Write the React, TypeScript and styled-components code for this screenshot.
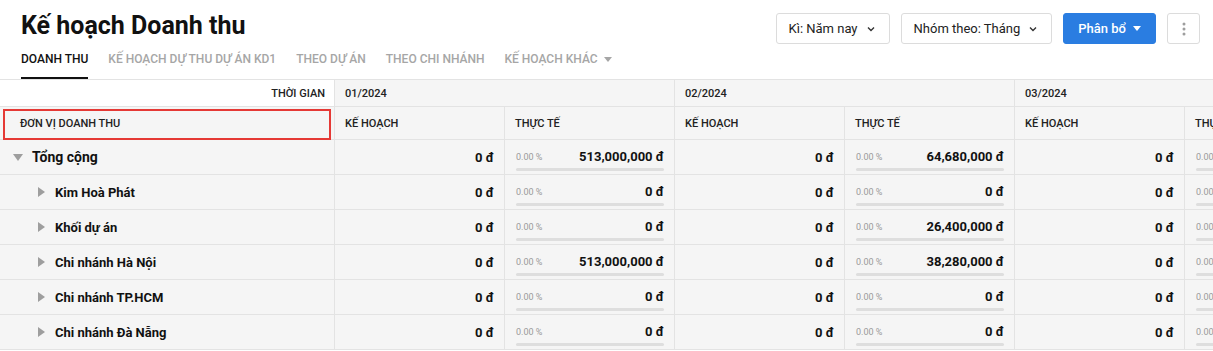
import React from 'react';
import styled, { createGlobalStyle } from 'styled-components';

const GlobalStyle = createGlobalStyle`
    body {
        margin: 0;
        background: #ffffff;
        font-family: Roboto, "Noto Sans", Arial, sans-serif;
        color: #111;
    }
    * { box-sizing: border-box; }
`;

const Page = styled.div`
    width: 1213px;
    height: 351px;
    overflow: hidden;
    background: #fff;
`;

const Header = styled.header`
    display: flex;
    justify-content: space-between;
    align-items: flex-start;
    padding: 0 13px 0 21px;
    border-bottom: 1px solid #e3e3e3;
    height: 80px;
`;

const TitleBlock = styled.div`
    display: flex;
    flex-direction: column;
`;

const Title = styled.h1`
    margin: 10px 0 0;
    font-size: 25px;
    font-weight: 700;
    line-height: 32px;
    color: #111;
`;

const Tabs = styled.nav`
    display: flex;
    gap: 20px;
    margin-top: 6px;
`;

const Tab = styled.div<{ $active?: boolean }>`
    display: flex;
    align-items: center;
    gap: 6px;
    height: 31px;
    font-size: 12px;
    font-weight: 500;
    color: ${(p) => (p.$active ? '#111' : '#a6a6a6')};
    border-bottom: 2px solid ${(p) => (p.$active ? '#111' : 'transparent')};
    padding-bottom: 7px;
`;

const Caret = styled.span<{ $color?: string }>`
    width: 0;
    height: 0;
    border-left: 4px solid transparent;
    border-right: 4px solid transparent;
    border-top: 5px solid ${(p) => p.$color || '#a6a6a6'};
`;

const Toolbar = styled.div`
    display: flex;
    align-items: center;
    gap: 11px;
    margin-top: 13px;
`;

const SelectButton = styled.button<{ $primary?: boolean }>`
    display: flex;
    align-items: center;
    gap: ${(p) => (p.$primary ? 7 : 8)}px;
    height: 31px;
    padding: ${(p) => (p.$primary ? '0 14px 0 14px' : '0 13px 0 12px')};
    border: 1px solid ${(p) => (p.$primary ? '#2a7de1' : '#dcdcdc')};
    border-radius: 3px;
    background: ${(p) => (p.$primary ? '#2a7de1' : '#fff')};
    color: ${(p) => (p.$primary ? '#fff' : '#222')};
    font-family: Roboto, sans-serif;
    font-size: 13px;
    font-weight: ${(p) => (p.$primary ? 500 : 400)};
`;

const MoreButton = styled.button`
    width: 33px;
    height: 31px;
    border: 1px solid #dcdcdc;
    border-radius: 3px;
    background: #fff;
    display: flex;
    align-items: center;
    justify-content: center;
    padding: 0;
`;

const TableWrap = styled.div`
    overflow: hidden;
    background: #fff;
`;

const Grid = styled.div`
    display: grid;
    grid-template-columns: 335px repeat(6, 170px);
    width: 1355px;
    background: #f5f5f5;
`;

const HeadCell = styled.div<{ $span?: number; $white?: boolean; $right?: boolean; $h: number }>`
    grid-column: span ${(p) => p.$span || 1};
    height: ${(p) => p.$h}px;
    display: flex;
    align-items: center;
    justify-content: ${(p) => (p.$right ? 'flex-end' : 'flex-start')};
    padding: 0 9px 0 10px;
    background: ${(p) => (p.$white ? '#fff' : '#f5f5f5')};
    border-bottom: 1px solid #e3e3e3;
    border-right: 1px solid #e3e3e3;
    font-size: 11px;
    font-weight: 500;
    color: #222;
    position: relative;
`;

const UnitLabel = styled.span`
    padding-left: 10px;
`;

const Highlight = styled.span`
    position: absolute;
    left: 3px;
    top: 2px;
    right: 3px;
    bottom: -1px;
    border: 2px solid #e53935;
    pointer-events: none;
`;

const NameCell = styled.div<{ $level: number }>`
    height: 35px;
    display: flex;
    align-items: center;
    gap: ${(p) => (p.$level ? 10 : 9)}px;
    padding-left: ${(p) => (p.$level ? 38 : 13)}px;
    border-bottom: 1px solid #e3e3e3;
    border-right: 1px solid #e3e3e3;
    font-size: ${(p) => (p.$level ? 13 : 14)}px;
    font-weight: 700;
    color: #111;
`;

const DownArrow = styled.span`
    width: 0;
    height: 0;
    border-left: 5px solid transparent;
    border-right: 5px solid transparent;
    border-top: 7px solid #9e9e9e;
`;

const RightArrow = styled.span`
    width: 0;
    height: 0;
    border-top: 5px solid transparent;
    border-bottom: 5px solid transparent;
    border-left: 7px solid #9e9e9e;
`;

const PlanCell = styled.div`
    height: 35px;
    display: flex;
    align-items: center;
    justify-content: flex-end;
    padding-right: 10px;
    border-bottom: 1px solid #e3e3e3;
    border-right: 1px solid #e3e3e3;
    font-size: 13px;
    font-weight: 700;
    color: #111;
`;

const ActualCell = styled.div`
    height: 35px;
    display: flex;
    flex-direction: column;
    justify-content: center;
    padding: 4px 10px 0 11px;
    border-bottom: 1px solid #e3e3e3;
    border-right: 1px solid #e3e3e3;
`;

const ActualLine = styled.div`
    display: flex;
    justify-content: space-between;
    align-items: center;
    height: 18px;
`;

const Percent = styled.span`
    font-size: 9px;
    color: #9a9a9a;
`;

const Amount = styled.span`
    font-size: 13px;
    font-weight: 700;
    color: #111;
`;

const Bar = styled.div`
    height: 3px;
    margin-top: 2px;
    border-radius: 2px;
    background: #dedede;
`;

const FootLine = styled.div`
    height: 2px;
    background: #fff;
`;

const months = ['01/2024', '02/2024', '03/2024'];

const rows = [
    { name: 'Tổng cộng', level: 0, values: ['513,000,000 đ', '64,680,000 đ', '0 đ'] },
    { name: 'Kim Hoà Phát', level: 1, values: ['0 đ', '0 đ', '0 đ'] },
    { name: 'Khối dự án', level: 1, values: ['0 đ', '26,400,000 đ', '0 đ'] },
    { name: 'Chi nhánh Hà Nội', level: 1, values: ['513,000,000 đ', '38,280,000 đ', '0 đ'] },
    { name: 'Chi nhánh TP.HCM', level: 1, values: ['0 đ', '0 đ', '0 đ'] },
    { name: 'Chi nhánh Đà Nẵng', level: 1, values: ['0 đ', '0 đ', '0 đ'] },
];

function Chevron() {
    return (
        <svg width="10" height="10" viewBox="0 0 10 10">
            <path d="M2 3.5 L5 6.5 L8 3.5" fill="none" stroke="#333" strokeWidth="1.4" />
        </svg>
    );
}

function App() {
    return (
        <Page>
            <GlobalStyle />
            <Header>
                <TitleBlock>
                    <Title>Kế hoạch Doanh thu</Title>
                    <Tabs>
                        <Tab $active>DOANH THU</Tab>
                        <Tab>KẾ HOẠCH DỰ THU DỰ ÁN KD1</Tab>
                        <Tab>THEO DỰ ÁN</Tab>
                        <Tab>THEO CHI NHÁNH</Tab>
                        <Tab>
                            KẾ HOẠCH KHÁC <Caret />
                        </Tab>
                    </Tabs>
                </TitleBlock>
                <Toolbar>
                    <SelectButton>
                        Kì: Năm nay
                        <Chevron />
                    </SelectButton>
                    <SelectButton>
                        Nhóm theo: Tháng
                        <Chevron />
                    </SelectButton>
                    <SelectButton $primary>
                        Phân bổ <Caret $color="#fff" />
                    </SelectButton>
                    <MoreButton>
                        <svg width="4" height="16" viewBox="0 0 4 16">
                            <circle cx="2" cy="3" r="1.5" fill="#9e9e9e" />
                            <circle cx="2" cy="8" r="1.5" fill="#9e9e9e" />
                            <circle cx="2" cy="13" r="1.5" fill="#9e9e9e" />
                        </svg>
                    </MoreButton>
                </Toolbar>
            </Header>
            <TableWrap>
                <Grid>
                    <HeadCell $h={27} $white $right>
                        THỜI GIAN
                    </HeadCell>
                    {months.map((m) => (
                        <HeadCell key={m} $h={27} $span={2}>
                            {m}
                        </HeadCell>
                    ))}
                    <HeadCell $h={33}>
                        <UnitLabel>ĐƠN VỊ DOANH THU</UnitLabel>
                        <Highlight />
                    </HeadCell>
                    {months.map((m) => (
                        <React.Fragment key={m}>
                            <HeadCell $h={33}>KẾ HOẠCH</HeadCell>
                            <HeadCell $h={33}>THỰC TẾ</HeadCell>
                        </React.Fragment>
                    ))}
                    {rows.map((r) => (
                        <React.Fragment key={r.name}>
                            <NameCell $level={r.level}>
                                {r.level ? <RightArrow /> : <DownArrow />}
                                {r.name}
                            </NameCell>
                            {r.values.map((v, i) => (
                                <React.Fragment key={i}>
                                    <PlanCell>0 đ</PlanCell>
                                    <ActualCell>
                                        <ActualLine>
                                            <Percent>0.00 %</Percent>
                                            <Amount>{v}</Amount>
                                        </ActualLine>
                                        <Bar />
                                    </ActualCell>
                                </React.Fragment>
                            ))}
                        </React.Fragment>
                    ))}
                </Grid>
                <FootLine />
            </TableWrap>
        </Page>
    );
}

export default App;
